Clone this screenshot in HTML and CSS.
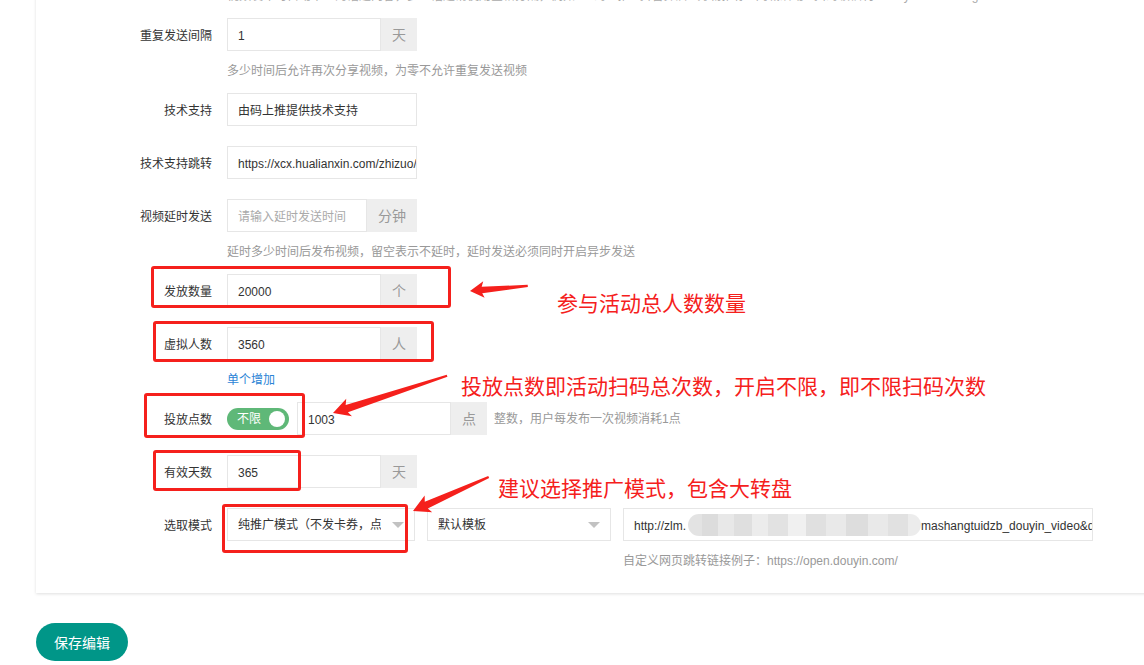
FILE: index.html
```html
<!DOCTYPE html>
<html lang="zh-CN">
<head>
<meta charset="utf-8">
<title>编辑活动</title>
<link rel="stylesheet" href="styles.css">
</head>
<body>
<div class="card">
  <div class="help help-top">视频发布时自动带上的话题内容，多个话题请使用空格分隔，例如：#码上推 #抖音探店 #好物推荐 #同城活动 #扫码领福利 #douyin #mashangtui</div>

  <div class="row row-help">
    <div class="lbl">重复发送间隔</div>
    <div class="ctrl">
      <div class="group">
        <div class="input w154">1</div>
        <div class="addon">天</div>
      </div>
      <div class="help">多少时间后允许再次分享视频，为零不允许重复发送视频</div>
    </div>
  </div>

  <div class="row">
    <div class="lbl">技术支持</div>
    <div class="ctrl">
      <div class="input w190">由码上推提供技术支持</div>
    </div>
  </div>

  <div class="row">
    <div class="lbl">技术支持跳转</div>
    <div class="ctrl">
      <div class="input w190">https://xcx.hualianxin.com/zhizuo/index.html</div>
    </div>
  </div>

  <div class="row row-help">
    <div class="lbl">视频延时发送</div>
    <div class="ctrl">
      <div class="group">
        <div class="input w140 placeholder">请输入延时发送时间</div>
        <div class="addon w50">分钟</div>
      </div>
      <div class="help">延时多少时间后发布视频，留空表示不延时，延时发送必须同时开启异步发送</div>
    </div>
  </div>

  <div class="row">
    <div class="lbl">发放数量</div>
    <div class="ctrl">
      <div class="group">
        <div class="input w154">20000</div>
        <div class="addon">个</div>
      </div>
    </div>
  </div>

  <div class="row row-help">
    <div class="lbl">虚拟人数</div>
    <div class="ctrl">
      <div class="group">
        <div class="input w154">3560</div>
        <div class="addon">人</div>
      </div>
      <div class="help"><a class="link">单个增加</a></div>
    </div>
  </div>

  <div class="row">
    <div class="lbl">投放点数</div>
    <div class="ctrl inline">
      <div class="switch"><span class="switch-text">不限</span><span class="knob"></span></div>
      <div class="group">
        <div class="input w154">1003</div>
        <div class="addon">点</div>
      </div>
      <div class="aux">整数，用户每发布一次视频消耗1点</div>
    </div>
  </div>

  <div class="row">
    <div class="lbl">有效天数</div>
    <div class="ctrl">
      <div class="group">
        <div class="input w154">365</div>
        <div class="addon">天</div>
      </div>
    </div>
  </div>

  <div class="row">
    <div class="lbl">选取模式</div>
    <div class="ctrl">
      <div class="selects">
        <div class="select w188"><span class="sel-text">纯推广模式（不发卡券，点击即可参与）</span><span class="caret"></span></div>
        <div class="select w184"><span class="sel-text">默认模板</span><span class="caret"></span></div>
        <div class="url-col">
          <div class="input w470">http://zlm.<span class="blur"></span>mashangtuidzb_douyin_video&amp;douyin=1</div>
          <div class="help">自定义网页跳转链接例子：https://open.douyin.com/</div>
        </div>
      </div>
    </div>
  </div>
</div>

<button class="save" type="button">保存编辑</button>

<div class="notes">
  <div class="mark m1"></div>
  <div class="mark m2"></div>
  <div class="mark m3"></div>
  <div class="mark m4"></div>
  <div class="mark m5"></div>
  <svg class="arrows" width="1144" height="665" viewBox="0 0 1144 665">
    <g fill="#f5201c">
      <path transform="translate(470 291) rotate(-4.9)" d="M0 0 L14 -8.5 L12 -3.2 L58 -1.2 L58 0.9 L12 3.4 L14 8 Z"/>
      <path transform="translate(333 413) rotate(-18)" d="M0 0 L17 -9.5 L14.5 -3.6 L120 -1.3 L120 1 L14.5 3.8 L17 9 Z"/>
      <path transform="translate(413 511) rotate(-24.1)" d="M0 0 L17 -9.5 L14.5 -3.6 L83 -1.3 L83 1 L14.5 3.8 L17 9 Z"/>
    </g>
  </svg>
  <div class="note n1">参与活动总人数数量</div>
  <div class="note n2">投放点数即活动扫码总次数，开启不限，即不限扫码次数</div>
  <div class="note n3">建议选择推广模式，包含大转盘</div>
</div>
</body>
</html>
```

FILE: styles.css
```css
html, body {
  margin: 0;
  padding: 0;
  overflow: hidden;
  background: #fff;
}

body {
  font-family: "Liberation Sans", "Noto Sans CJK SC", sans-serif;
  font-size: 12px;
  color: #333;
}

.card {
  margin: -40px -20px 0 36px;
  padding: 26px 0 24px;
  background: #fff;
  box-shadow: 0 1px 3px rgba(0, 0, 0, 0.13);
}

.help {
  margin-top: 10px;
  line-height: 18px;
  height: 18px;
  padding-top: 1px;
  margin-bottom: -1px;
  color: #999;
  white-space: nowrap;
}

.help-top {
  margin: 0 0 13px 191px;
  color: #aaa;
}

.row {
  display: flex;
  align-items: flex-start;
  margin-bottom: 20px;
}

.row-help {
  margin-bottom: 14px;
}

.row:last-child {
  margin-bottom: 0;
}

.lbl {
  box-sizing: border-box;
  flex: 0 0 191px;
  padding: 2px 15px 0 0;
  text-align: right;
  line-height: 32px;
  height: 33px;
  color: #333;
}

.ctrl {
  display: flex;
  flex-direction: column;
}

.ctrl.inline {
  flex-direction: row;
  align-items: center;
}

.group {
  display: flex;
}

.input {
  box-sizing: border-box;
  height: 33px;
  border: 1px solid #e6e6e6;
  padding: 2px 10px 0;
  line-height: 30px;
  background: #fff;
  color: #333;
  white-space: nowrap;
  overflow: hidden;
}

.placeholder {
  color: #aaa;
}

.w140 { width: 140px; }
.w154 { width: 154px; }
.w184 { width: 184px; }
.w188 { width: 188px; }
.w190 { width: 190px; }
.w470 { width: 470px; }

.addon {
  box-sizing: border-box;
  width: 36px;
  height: 33px;
  padding-top: 2px;
  line-height: 31px;
  background: #eee;
  color: #999;
  font-size: 14px;
  text-align: center;
}

.addon.w50 {
  width: 50px;
}

.link {
  color: #2b84d6;
  text-decoration: none;
}

.switch {
  box-sizing: border-box;
  display: flex;
  align-items: center;
  justify-content: space-between;
  width: 62px;
  height: 22px;
  margin: 1px 8px 0 0;
  padding: 0 4px 0 10px;
  border-radius: 11px;
  background: #5fb878;
  color: #fff;
  line-height: 22px;
}

.switch-text {
  font-size: 12px;
}

.knob {
  width: 16px;
  height: 16px;
  border-radius: 50%;
  background: #fff;
}

.aux {
  margin-left: 7px;
  padding-top: 2px;
  color: #999;
  line-height: 31px;
  white-space: nowrap;
}

.selects {
  display: flex;
  align-items: flex-start;
  gap: 12px;
}

.select {
  box-sizing: border-box;
  display: flex;
  align-items: center;
  gap: 11px;
  height: 33px;
  padding: 0 10px;
  border: 1px solid #e6e6e6;
  background: #fff;
}

.sel-text {
  flex: 1;
  overflow: hidden;
  white-space: nowrap;
  padding-top: 2px;
  line-height: 29px;
  color: #333;
}

.caret {
  flex: 0 0 auto;
  width: 0;
  height: 0;
  border-style: solid;
  border-width: 6px 6px 0;
  border-color: #c2c2c2 transparent transparent;
}

.url-col {
  display: flex;
  flex-direction: column;
}

.blur {
  display: inline-block;
  width: 233px;
  height: 22px;
  margin-left: 2px;
  vertical-align: middle;
  border-radius: 11px;
  background: linear-gradient(90deg,
    #e3e3e3 0, #e3e3e3 14px,
    #dcdcdc 14px, #dcdcdc 30px,
    #e8e8e8 30px, #e8e8e8 46px,
    #dfdfdf 46px, #dfdfdf 64px,
    #ececec 64px, #ececec 80px,
    #e2e2e2 80px, #e2e2e2 100px,
    #f0f0f0 100px, #f0f0f0 118px,
    #e0e0e0 118px, #e0e0e0 138px,
    #e9e9e9 138px, #e9e9e9 158px,
    #dddddd 158px, #dddddd 180px,
    #e9e9e9 180px, #e9e9e9 200px,
    #e1e1e1 200px, #e1e1e1 220px,
    #ececec 220px);
  position: relative;
  top: -2px;
}

.save {
  display: block;
  margin: 30px 0 0 36px;
  width: 92px;
  height: 38px;
  border: none;
  border-radius: 19px;
  background: #009688;
  color: #fff;
  font-family: "Liberation Sans", "Noto Sans CJK SC", sans-serif;
  font-size: 14px;
  padding: 0;
}

/* annotation overlay (drawn on top of the screenshot content) */
.notes {
  position: absolute;
  left: 0;
  top: 0;
  width: 1144px;
  height: 665px;
  pointer-events: none;
}

.arrows {
  position: absolute;
  left: 0;
  top: 0;
}

.mark {
  position: absolute;
  box-sizing: border-box;
  border: 3px solid #f5201c;
  border-radius: 3px;
}

.m1 { left: 151px; top: 266px; width: 300px; height: 42px; }
.m2 { left: 153px; top: 321px; width: 281px; height: 41px; }
.m3 { left: 144px; top: 393px; width: 161px; height: 45px; }
.m4 { left: 153px; top: 450px; width: 148px; height: 41px; }
.m5 { left: 222px; top: 504px; width: 186px; height: 49px; }

.note {
  position: absolute;
  font-family: "Noto Sans CJK SC", sans-serif;
  font-size: 21px;
  line-height: 21px;
  color: #f5201c;
  white-space: nowrap;
}

.n1 { left: 557px; top: 292px; }
.n2 { left: 461px; top: 375px; }
.n3 { left: 498px; top: 477px; }
```
